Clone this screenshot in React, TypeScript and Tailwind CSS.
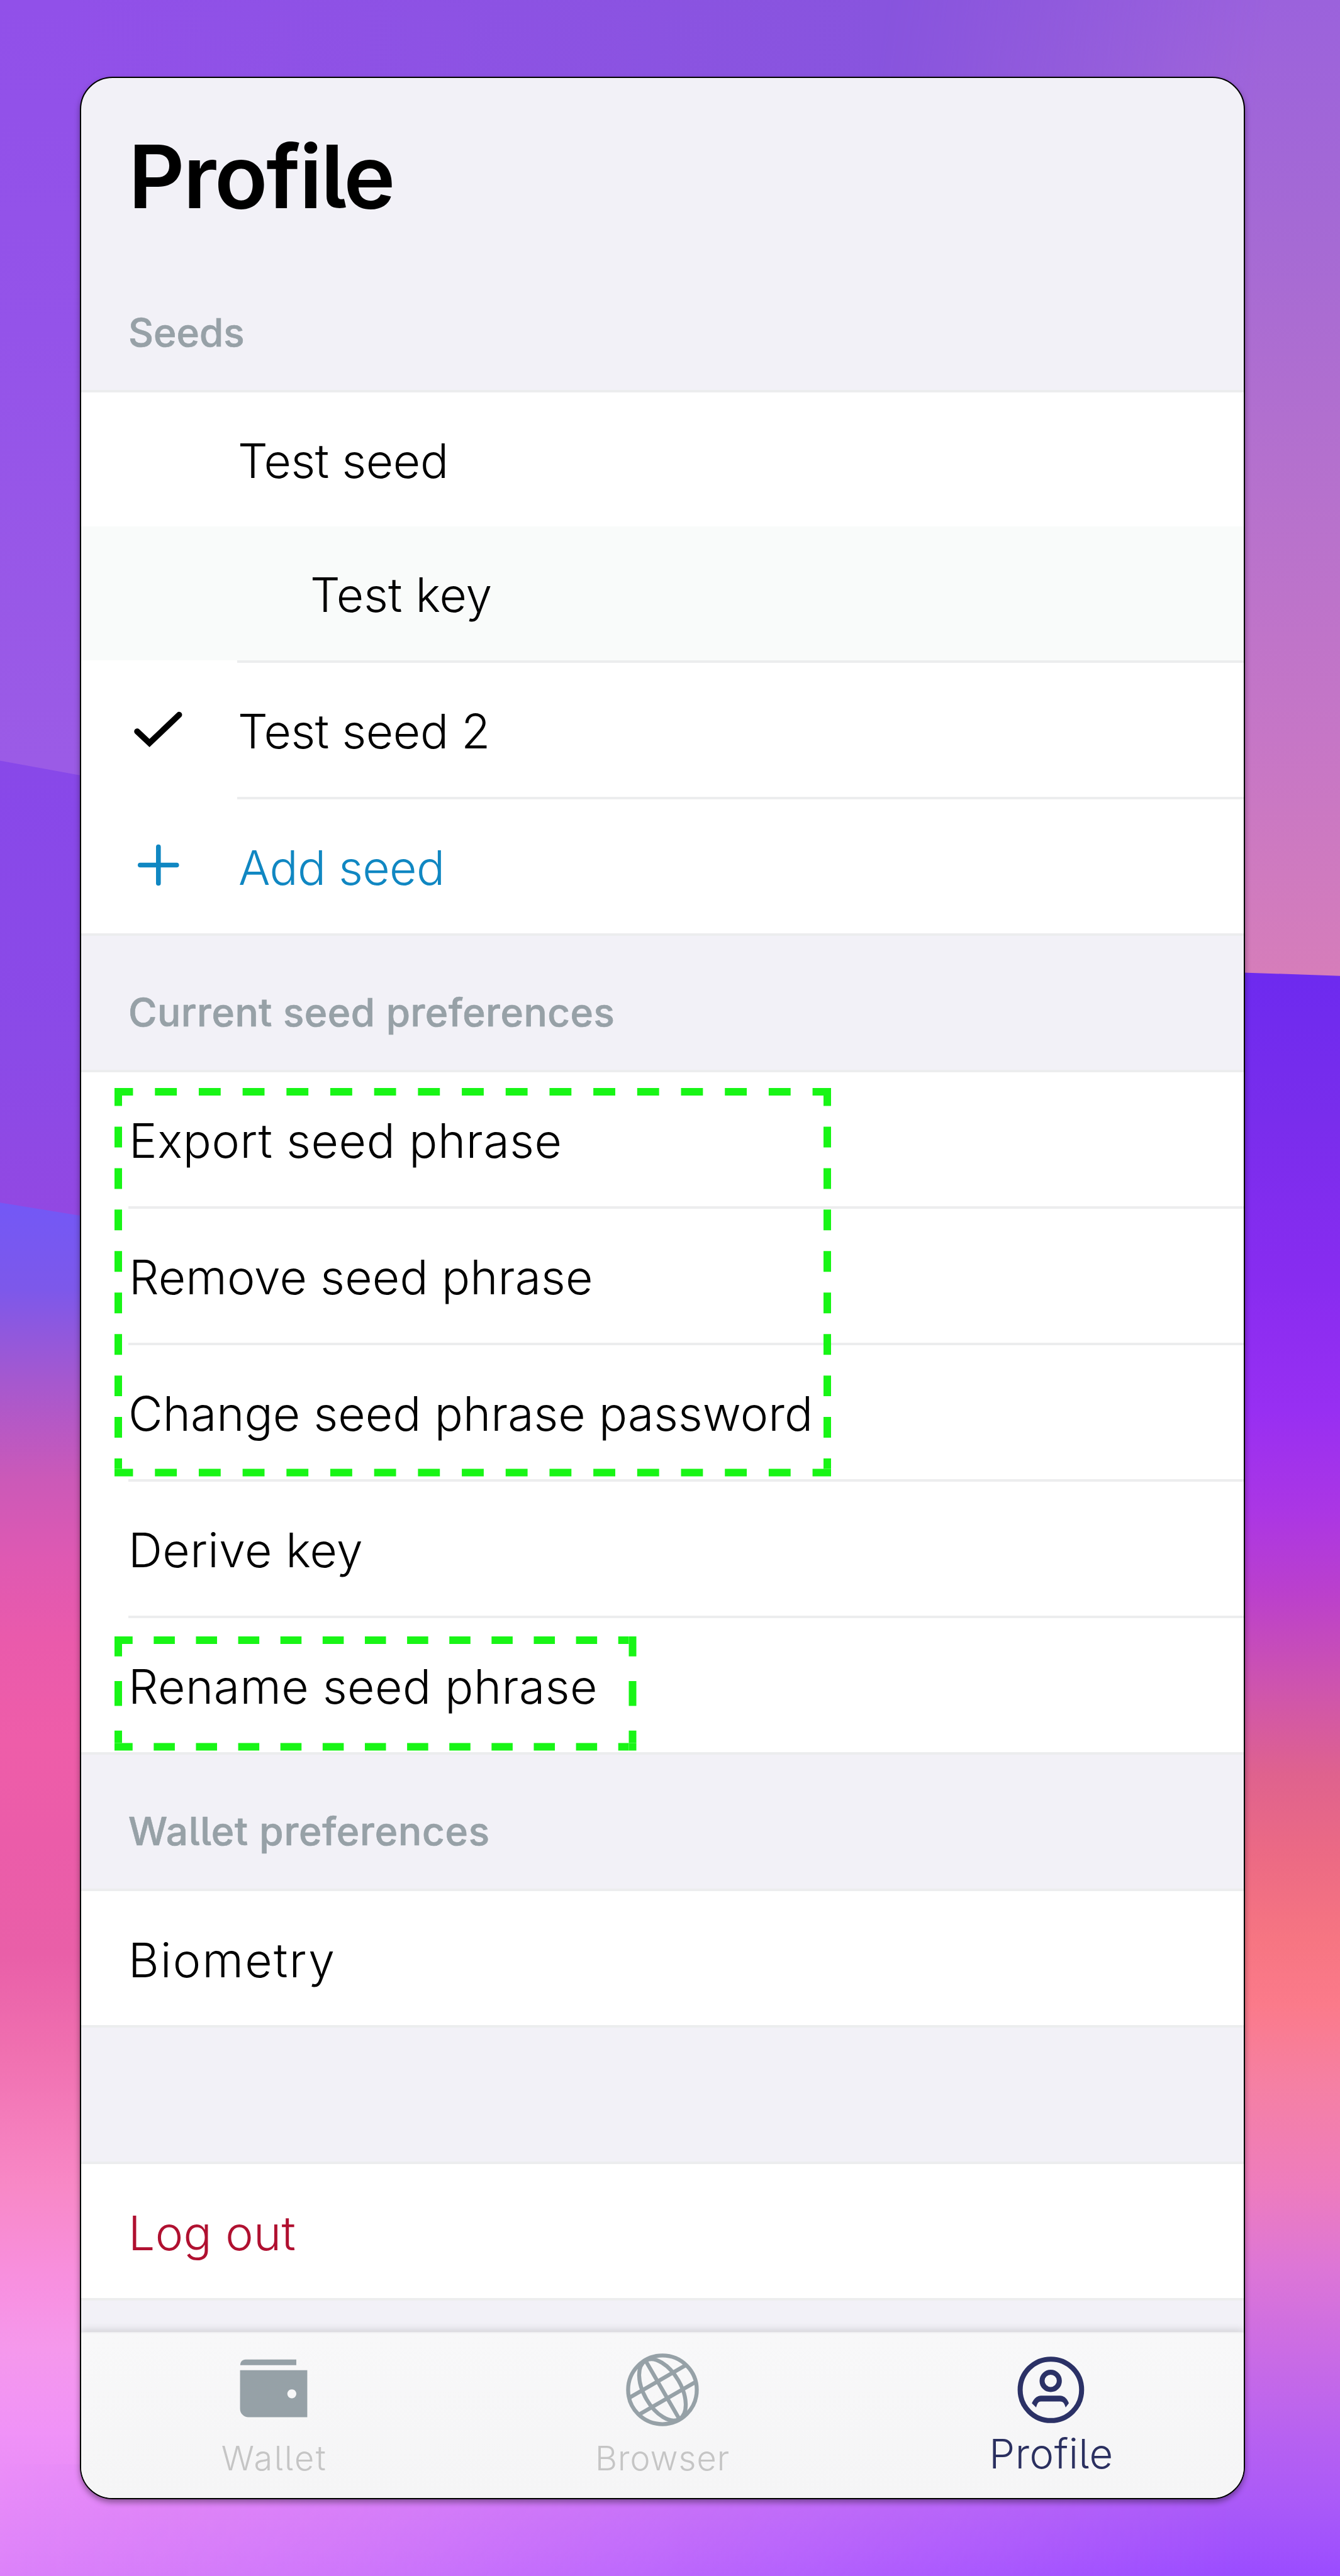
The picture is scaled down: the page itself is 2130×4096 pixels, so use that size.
import type { ReactNode } from "react";

type Stop = [number, string];

const leftSky: Stop[] = [
  [0, "#9150e9"], [200, "#9453e9"], [463, "#9b5be6"], [475, "#9b5be6"],
];
const leftBand: Stop[] = [
  [460, "#8848e9"], [640, "#8b4ae7"], [740, "#9248e2"],
];
const leftGlow: Stop[] = [
  [732, "#7358f6"], [785, "#7d58ea"], [840, "#a558cf"], [900, "#cb59b8"], [950, "#df59b2"],
  [1000, "#ea5aab"], [1060, "#ee5da9"], [1120, "#eb5ca9"], [1190, "#e95fa8"], [1250, "#f070b0"],
  [1330, "#f888c6"], [1390, "#f890e0"], [1430, "#f598ec"], [1480, "#f092f7"], [1568, "#dc82fa"],
];
const rightSky: Stop[] = [
  [0, "#9b62dc"], [150, "#a66ad4"], [300, "#b671cd"], [450, "#c676c6"], [594, "#d67dba"],
];
const rightGlow: Stop[] = [
  [592, "#6d2aef"], [680, "#792dec"], [780, "#882cf0"], [860, "#982ff2"], [920, "#ab36e4"],
  [970, "#bb40cc"], [1030, "#cf55ac"], [1080, "#df628e"], [1130, "#ec6a84"], [1180, "#f67582"],
  [1220, "#fb7a8a"], [1270, "#f580a4"], [1330, "#ee7cbd"], [1380, "#dd76d6"], [1430, "#cb6ce4"],
  [1480, "#b862f0"], [1530, "#a858f9"], [1568, "#9a4cff"],
];

function Fade({ id, stops }: { id: string; stops: Stop[] }) {
  return (
    <linearGradient id={id} gradientUnits="userSpaceOnUse" x1="0" y1="0" x2="0" y2="1568">
      {stops.map(([y, c], i) => (
        <stop key={i} offset={y / 1568} stopColor={c} />
      ))}
    </linearGradient>
  );
}

function Wallpaper() {
  return (
    <svg className="absolute inset-0 h-full w-full" viewBox="0 0 816 1568" preserveAspectRatio="none" aria-hidden="true">
      <defs>
        <Fade id="ls" stops={leftSky} />
        <Fade id="lb" stops={leftBand} />
        <Fade id="lg" stops={leftGlow} />
        <Fade id="rs" stops={rightSky} />
        <Fade id="rg" stops={rightGlow} />
        <linearGradient id="across" x1="0" x2="1" y1="0" y2="0">
          <stop offset="0" stopColor="#000" />
          <stop offset="0.25" stopColor="#333" />
          <stop offset="0.92" stopColor="#fff" />
        </linearGradient>
        <linearGradient id="acrossTop" gradientUnits="userSpaceOnUse" x1="540" x2="770" y1="0" y2="30">
          <stop offset="0" stopColor="#000" />
          <stop offset="1" stopColor="#fff" />
        </linearGradient>
        <linearGradient id="dip" x1="0" x2="1" y1="0" y2="0">
          <stop offset="0.05" stopColor="#8854de" stopOpacity="0" />
          <stop offset="0.66" stopColor="#8854de" stopOpacity="1" />
        </linearGradient>
        <mask id="m" maskUnits="userSpaceOnUse" x="0" y="0" width="816" height="1568">
          <rect width="816" height="1568" fill="url(#across)" />
        </mask>
        <mask id="mt" maskUnits="userSpaceOnUse" x="0" y="0" width="816" height="1568">
          <rect width="816" height="1568" fill="url(#acrossTop)" />
        </mask>
      </defs>
      <rect width="816" height="1568" fill="url(#ls)" />
      <rect width="816" height="100" fill="url(#dip)" />
      <path d="M0 463L400 536V1568H0Z" fill="url(#lb)" />
      <path d="M0 732L49 740L400 780L816 780V1568H0Z" fill="url(#lg)" />
      <rect x="400" width="416" height="600" fill="url(#rs)" mask="url(#mt)" />
      <g mask="url(#m)">
        <path d="M400 580L757 592L816 594V1568H400Z" fill="url(#rg)" />
        <rect y="1500" width="401" height="68" fill="url(#rg)" />
      </g>
    </svg>
  );
}

const Line = ({ inset = "" }: { inset?: string }) => (
  <div className={`h-1 shrink-0 bg-white ${inset}`}>
    <div className="h-full bg-[#ecedee]" />
  </div>
);

function SectionTitle({ children, spacing }: { children: ReactNode; spacing: string }) {
  return (
    <h2 className={`h-[213px] shrink-0 pt-[91px] pl-[75px] text-[62px] leading-[62px] font-medium text-[#97a1a7] [-webkit-text-stroke:0.7px_#97a1a7] ${spacing}`}>{children}</h2>
  );
}

function Row({ children, icon, className = "" }: { children: ReactNode; icon?: ReactNode; className?: string }) {
  return (
    <div className={`flex h-[213px] shrink-0 items-center pt-[3px] text-[75px] leading-[75px] font-light whitespace-pre ${className}`}>
      {icon}
      {children}
    </div>
  );
}

function Dashes({ w, h, nx, ny, className }: { w: number; h: number; nx: number; ny: number; className: string }) {
  const t = 12;
  const px = (w - 2 * t) / nx;
  const py = (h - 2 * t) / ny;
  const horizontal = { strokeDasharray: px / 2, strokeDashoffset: px / 4 };
  const vertical = { strokeDasharray: py / 2, strokeDashoffset: py / 4 };
  return (
    <svg className={`absolute ${className}`} width={w} height={h} viewBox={`0 0 ${w} ${h}`} fill="none" stroke="#18f516" strokeWidth={t}>
      <path {...horizontal} d={`M${t} ${t / 2}H${w - t}`} />
      <path {...horizontal} d={`M${t} ${h - t / 2}H${w - t}`} />
      <path {...vertical} d={`M${t / 2} ${t}V${h - t}`} />
      <path {...vertical} d={`M${w - t / 2} ${t}V${h - t}`} />
      <path d={`M0 ${t / 2}H${t}M${w - t} ${t / 2}H${w}M0 ${h - t / 2}H${t}M${w - t} ${h - t / 2}H${w}`} />
    </svg>
  );
}

const CheckIcon = () => (
  <svg className="mr-[81px] ml-[78px] h-[90px] w-[90px]" viewBox="0 0 90 90" fill="none" stroke="#000" strokeWidth="9.5" strokeLinecap="round">
    <path d="M11 46L30.6 64.5L77.7 19.6" />
  </svg>
);

const PlusIcon = () => (
  <svg className="mr-[82px] ml-[78px] h-[90px] w-[90px]" viewBox="0 0 90 90" fill="none" stroke="#1087c2" strokeWidth="7.6" strokeLinecap="round">
    <path d="M44.8 12.5V70.5M15.8 41.5H73.8" />
  </svg>
);

const WalletIcon = () => (
  <svg className="h-[116px] w-[116px]" viewBox="186 191 406 406" fill="#96a1a7">
    <path d="M196 257C196 238 208 225 226 225H508V257Z" />
    <path fillRule="evenodd" d="M195 285H569V546H242C216 546 195 526 195 500ZM483 391a25 25 0 1 0 0.1 0Z" />
  </svg>
);

const GlobeIcon = () => (
  <svg className="h-[116px] w-[116px]" viewBox="299 191 406 406" fill="none" stroke="#96a1a7" strokeWidth="22">
    <circle cx="502" cy="394" r="191" />
    <g transform="rotate(-30 502 394)">
      <ellipse cx="502" cy="394" rx="103" ry="188" />
      <path d="M502 212V576M319 340H685M319 448H685" />
    </g>
  </svg>
);

const PersonIcon = () => (
  <svg className="h-[116px] w-[116px]" viewBox="55 42 406 406" fill="none" stroke="#2b3166" strokeWidth="28">
    <circle cx="263" cy="245" r="171" />
    <circle cx="262" cy="195" r="48" />
    <path stroke="none" fill="#2b3166" d="M157 319C168 295 185 277 208 277H314C337 277 354 295 363 319L345 343C340 328 335 310 314 310H208C190 310 186 328 181 343Z" />
  </svg>
);

export default function App() {
  return (
    <div className="relative h-[4096px] w-[2130px] overflow-hidden bg-[#9150e9] pt-[122px] pl-[127px] font-['Inter',sans-serif] text-black [font-feature-settings:'cv05']">
      <Wallpaper />
      <main className="relative flex h-[3852px] w-[1852px] flex-col overflow-hidden rounded-[52px] border-2 border-black bg-[#f2f1f7] shadow-[0_5px_10px_rgba(0,0,0,0.38)]">
        <h1 className="h-[283px] shrink-0 pt-[87px] pl-[75px] text-[139px] leading-[139px] font-semibold tracking-[-2.4px]">Profile</h1>

        <SectionTitle spacing="tracking-[0px]">Seeds</SectionTitle>
        <Line />
        <Row className="bg-white pl-[249px] tracking-[-0.4px]">Test seed</Row>
        <Row className="bg-[#f9fbfa] pl-[364px] tracking-[0px]">Test key</Row>
        <Line inset="pl-[248px]" />
        <Row icon={<CheckIcon />} className="bg-white tracking-[-0.4px]">Test seed 2</Row>
        <Line inset="pl-[248px]" />
        <Row icon={<PlusIcon />} className="bg-white tracking-[-0.6px] text-[#1087c2]">Add seed</Row>
        <Line />

        <SectionTitle spacing="tracking-[0.53px]">Current seed preferences</SectionTitle>
        <Line />
        <div className="relative shrink-0">
          <Row className="bg-white pl-[76px] tracking-[0.64px]">Export seed phrase</Row>
          <Line inset="pl-[75px]" />
          <Row className="bg-white pl-[76px] tracking-[0.15px]">Remove seed phrase</Row>
          <Line inset="pl-[75px]" />
          <Row className="bg-white pl-[75px] tracking-[0.08px]">Change seed phrase password</Row>
          <Dashes w={1139} h={617.5} nx={16} ny={9} className="top-[25px] left-[53px]" />
        </div>
        <Line inset="pl-[75px]" />
        <Row className="bg-white pl-[75px] tracking-[0.4px]">Derive key</Row>
        <Line inset="pl-[75px]" />
        <div className="relative shrink-0">
          <Row className="bg-white pl-[75px] tracking-[0.5px]">Rename seed phrase</Row>
          <Dashes w={829.5} h={181.5} nx={12} ny={2} className="top-[29px] left-[53px]" />
        </div>
        <Line />

        <SectionTitle spacing="tracking-[0.8px]">Wallet preferences</SectionTitle>
        <Line />
        <Row className="bg-white pt-[6px] pl-[75px] tracking-[2.3px]">Biometry</Row>
        <Line />
        <div className="h-[213px] shrink-0" />
        <Line />
        <Row className="bg-white pt-[6px] pl-[75px] tracking-[0.3px] text-[#b01030]">Log out</Row>
        <Line />

        <nav className="mt-auto grid h-[264px] shrink-0 grid-cols-3 border-t-2 border-[#efeff1] bg-linear-to-b from-[#f8f8f9] to-[#f5f5f6] pt-8 font-light text-[#c5c5c5] shadow-[0_-3px_12px_rgba(0,0,0,0.14)]">
          <div className="flex flex-col items-center gap-6">
            <WalletIcon />
            <span className="pr-0.5 text-[54px] leading-[54px] tracking-[2.4px]">Wallet</span>
          </div>
          <div className="flex flex-col items-center gap-6">
            <GlobeIcon />
            <span className="text-[54px] leading-[54px] tracking-[1px]">Browser</span>
          </div>
          <div className="flex flex-col items-center gap-[11px] text-[#2b3060]">
            <PersonIcon />
            <span className="pl-1 text-[65px] leading-[65px] tracking-[0.6px]">Profile</span>
          </div>
        </nav>
      </main>
    </div>
  );
}
